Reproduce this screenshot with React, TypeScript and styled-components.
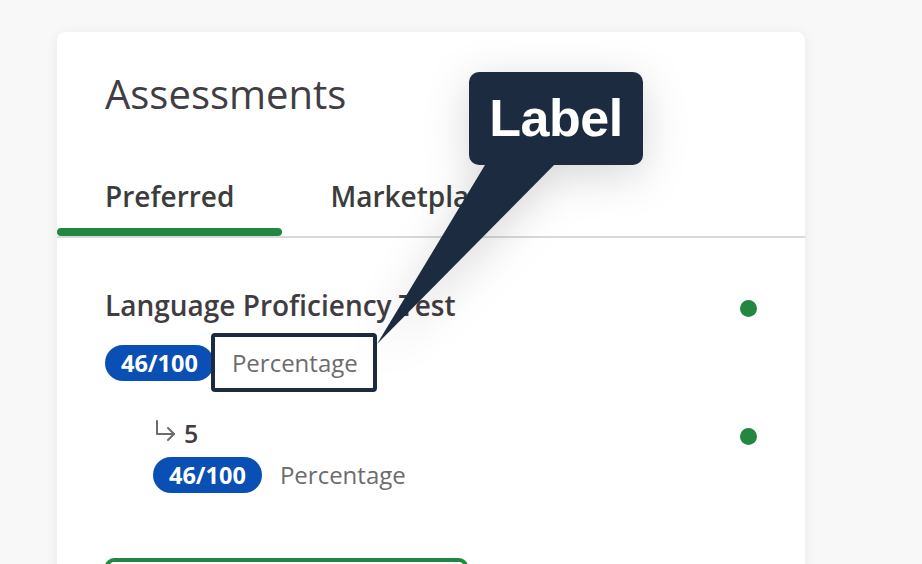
import styled, { createGlobalStyle } from 'styled-components';

const GlobalStyle = createGlobalStyle`
  html, body {
    margin: 0;
    padding: 0;
    background: #f8f8f8;
    font-family: "Open Sans", "Noto Sans", sans-serif;
    overflow: hidden;
  }
`;

const Page = styled.div`
  position: relative;
  width: 922px;
  height: 564px;
  padding: 32px 0 0 57px;
  box-sizing: border-box;
  overflow: hidden;
`;

const Card = styled.div`
  width: 748px;
  height: 600px;
  background: #fff;
  border-radius: 8px;
  box-shadow: 0 2px 12px rgba(0, 0, 0, 0.07);
`;

const Title = styled.h1`
  margin: 0;
  padding: 38px 48px 0;
  font-size: 40px;
  line-height: 48px;
  font-weight: 400;
  color: #413d44;
`;

const TabList = styled.div`
  display: flex;
  margin-top: 60px;
  border-bottom: 2px solid #d6dad8;
`;

const Tab = styled.div<{ $active?: boolean }>`
  position: relative;
  padding: 0 48px 22px;
  font-size: 28px;
  line-height: 36px;
  font-weight: 600;
  color: #3b3d3c;

  &::after {
    content: '';
    display: ${({ $active }) => ($active ? 'block' : 'none')};
    position: absolute;
    left: 0;
    right: 0;
    bottom: 0;
    height: 8px;
    border-radius: 4px;
    background: #238741;
  }
`;

const Body = styled.div`
  padding: 50px 48px 0;
`;

const Item = styled.div<{ $indent?: boolean; $gap?: number }>`
  display: flex;
  justify-content: space-between;
  align-items: flex-start;
  padding-left: ${({ $indent }) => ($indent ? '48px' : '0')};
  margin-top: ${({ $gap }) => $gap ?? 0}px;
`;

const ItemMain = styled.div`
  display: flex;
  flex-direction: column;
`;

const ItemTitle = styled.div<{ $size: number }>`
  display: flex;
  align-items: center;
  gap: 7px;
  font-size: ${({ $size }) => $size}px;
  line-height: 34px;
  font-weight: 600;
  color: #403c42;
`;

const SubIcon = styled.svg`
  width: 24px;
  height: 24px;
  margin-bottom: 4px;
`;

const ScoreRow = styled.div<{ $top: number }>`
  display: flex;
  align-items: center;
  gap: 18px;
  margin-top: ${({ $top }) => $top}px;
`;

const Badge = styled.span`
  display: inline-flex;
  align-items: center;
  height: 36px;
  padding: 0 16px;
  border-radius: 18px;
  background: #0a4fb4;
  color: #fff;
  font-size: 23.5px;
  font-weight: 700;
`;

const Unit = styled.span<{ $marked?: boolean }>`
  position: relative;
  font-size: 24px;
  line-height: 34px;
  color: #6c6c6c;

  &::after {
    content: '';
    display: ${({ $marked }) => ($marked ? 'block' : 'none')};
    position: absolute;
    left: -21px;
    right: -19px;
    top: -13px;
    bottom: -12px;
    border: 4px solid #1c2b40;
    border-radius: 4px;
  }
`;

const Dot = styled.span<{ $top: number }>`
  width: 17px;
  height: 17px;
  border-radius: 50%;
  background: #238741;
  margin-top: ${({ $top }) => $top}px;
  flex-shrink: 0;
`;

const ActionButton = styled.div`
  width: 363px;
  height: 48px;
  margin-top: 65px;
  box-sizing: border-box;
  border: 4px solid #238741;
  border-radius: 9px;
`;

const Callout = styled.div`
  position: absolute;
  left: 0;
  top: 0;
  filter: drop-shadow(0 10px 22px rgba(0, 0, 0, 0.16));
`;

const Bubble = styled.div`
  position: absolute;
  left: 469px;
  top: 72px;
  width: 174px;
  height: 93px;
  border-radius: 10px;
  background: #1c2b40;
  color: #fff;
  display: flex;
  align-items: center;
  justify-content: center;
  font-family: "Liberation Sans", Arial, sans-serif;
  font-size: 52px;
  font-weight: 700;
  letter-spacing: -0.5px;
  line-height: 1;
  padding-bottom: 2px;
  box-sizing: border-box;
`;

const Tail = styled.svg`
  position: absolute;
  left: 370px;
  top: 150px;
  width: 200px;
  height: 200px;
  overflow: visible;
`;

const SubArrow = () => (
  <SubIcon viewBox="0 0 24 24" fill="none" stroke="#6c6c6c" strokeWidth="2" strokeLinecap="round" strokeLinejoin="round">
    <path d="M4 2v13h17" />
    <path d="M15 9l6 6-6 6" />
  </SubIcon>
);

export default function App() {
  return (
    <Page>
      <GlobalStyle />
      <Card>
        <Title>Assessments</Title>
        <TabList>
          <Tab $active>Preferred</Tab>
          <Tab>Marketplace</Tab>
        </TabList>
        <Body>
          <Item>
            <ItemMain>
              <ItemTitle $size={28}>Language Proficiency Test</ItemTitle>
              <ScoreRow $top={23}>
                <Badge>46/100</Badge>
                <Unit $marked>Percentage</Unit>
              </ScoreRow>
            </ItemMain>
            <Dot $top={12} />
          </Item>
          <Item $indent $gap={35}>
            <ItemMain>
              <ItemTitle $size={25}>
                <SubArrow />
                5
              </ItemTitle>
              <ScoreRow $top={7}>
                <Badge>46/100</Badge>
                <Unit>Percentage</Unit>
              </ScoreRow>
            </ItemMain>
            <Dot $top={12} />
          </Item>
          <ActionButton />
        </Body>
      </Card>
      <Callout>
        <Tail viewBox="0 0 200 200">
          <polygon points="118,10 189,10 7,194" fill="#1c2b40" />
        </Tail>
        <Bubble>Label</Bubble>
      </Callout>
    </Page>
  );
}
